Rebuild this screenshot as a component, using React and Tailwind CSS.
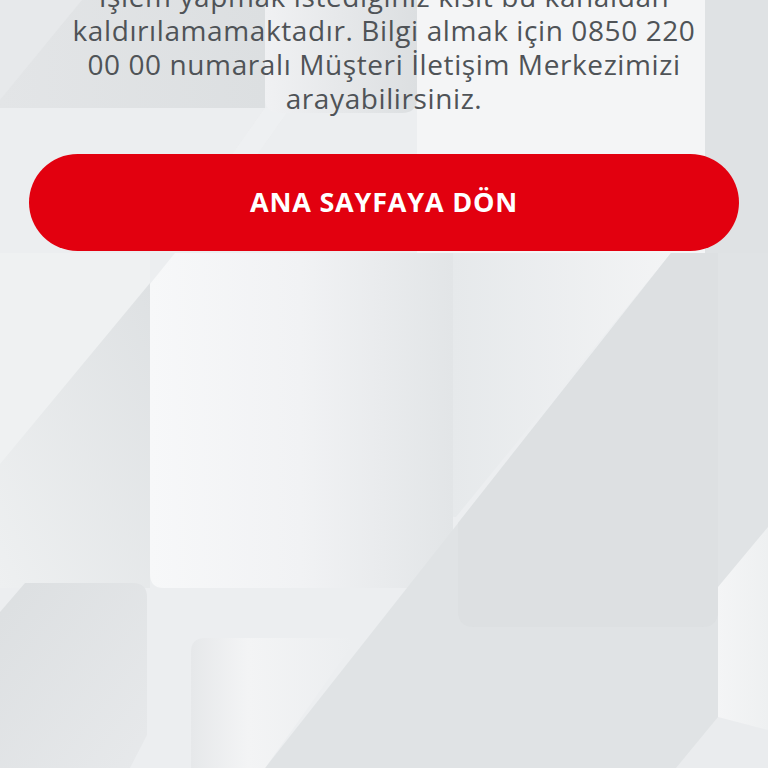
import React from "react";

function Background() {
  return (
    <svg
      className="absolute inset-0 h-full w-full"
      viewBox="0 0 768 768"
      preserveAspectRatio="none"
      aria-hidden="true"
    >
      <defs>
        <linearGradient id="lightRect" x1="0" y1="0" x2="1" y2="0">
          <stop offset="0" stopColor="#f7f8f9" />
          <stop offset="0.5" stopColor="#f1f2f4" />
          <stop offset="1" stopColor="#e2e5e7" />
        </linearGradient>
        <linearGradient id="midTri" x1="0" y1="0" x2="1" y2="0">
          <stop offset="0" stopColor="#e6e9eb" />
          <stop offset="1" stopColor="#f3f4f5" />
        </linearGradient>
        <linearGradient id="leftDark" x1="1" y1="0" x2="0" y2="1">
          <stop offset="0" stopColor="#dee1e3" />
          <stop offset="1" stopColor="#eef0f1" />
        </linearGradient>
        <linearGradient id="topShape" x1="0" y1="0" x2="1" y2="0">
          <stop offset="0" stopColor="#f0f1f3" />
          <stop offset="1" stopColor="#dcdfe1" />
        </linearGradient>
        <linearGradient id="topLeft" x1="0" y1="0" x2="1" y2="0">
          <stop offset="0" stopColor="#e3e5e7" />
          <stop offset="1" stopColor="#dcdfe1" />
        </linearGradient>
        <linearGradient id="lowerLight" x1="0" y1="0" x2="1" y2="0">
          <stop offset="0" stopColor="#e6e8ea" />
          <stop offset="0.35" stopColor="#f3f4f5" />
          <stop offset="1" stopColor="#eceef0" />
        </linearGradient>
        <linearGradient id="darkBL" x1="0" y1="0" x2="1" y2="1">
          <stop offset="0" stopColor="#dcdfe1" />
          <stop offset="1" stopColor="#e7e9eb" />
        </linearGradient>
        <linearGradient id="rightLight" x1="0" y1="0" x2="1" y2="0">
          <stop offset="0" stopColor="#f4f5f6" />
          <stop offset="1" stopColor="#eef0f1" />
        </linearGradient>
      </defs>

      <rect x="0" y="0" width="768" height="768" fill="#eceef0" />

      {/* top area */}
      <rect x="0" y="0" width="265" height="108" fill="url(#topLeft)" />
      <polygon points="0,0 82,0 0,100" fill="#e7e9eb" />
      <polygon points="265,108 290,108 225,200 200,200" fill="#f0f1f2" opacity="0.7" />
      <path d="M265 0 H417 V98 Q417 113 402 113 H280 Q265 113 265 98 Z" fill="url(#topShape)" />
      <rect x="417" y="0" width="288" height="253" fill="#f4f5f6" />
      <rect x="705" y="0" width="63" height="253" fill="#dfe2e4" />

      {/* middle area */}
      <rect x="0" y="253" width="150" height="335" fill="#eff1f2" />
      <polygon points="150,283 150,588 0,588 0,464" fill="url(#leftDark)" />
      <polygon points="453,253 671,253 456,517 453,517" fill="url(#midTri)" />
      <path d="M175 253 H453 V588 H164 Q150 588 150 574 V284 Z" fill="url(#lightRect)" />
      <polygon points="671,253 768,253 768,768 265,768" fill="#e0e3e5" />
      <path d="M458 523 L671 253 H718 V611 Q718 627 702 627 H474 Q458 627 458 611 Z" fill="#dadde0" opacity="0.6" />
      <polygon points="768,527 768,730 718,730 718,587" fill="url(#rightLight)" />
      <polygon points="718,717 768,730 768,768 676,768" fill="#eaecee" />

      {/* bottom area */}
      <rect x="147" y="588" width="60" height="180" fill="#eceef0" />
      <path d="M191 652 Q191 638 205 638 H345 Q356 638 352 646 L265 768 H191 Z" fill="url(#lowerLight)" />
      <path d="M25 583 H133 Q147 583 147 597 V735 L130 768 H0 V612 Z" fill="url(#darkBL)" />
    </svg>
  );
}

export default function App() {
  return (
    <div className="relative h-[768px] w-[768px] overflow-hidden bg-[#eceef0]">
      <Background />
      <div className="relative flex flex-col items-center">
        <p
          className="mt-[-21px] text-center text-[28px] leading-[34px] tracking-[0.6px] text-[#4f5357]"
          style={{ fontFamily: "'Open Sans', 'Noto Sans', sans-serif" }}
        >
          İşlem yapmak istediğiniz kısıt bu kanaldan
          <br />
          kaldırılamamaktadır. Bilgi almak için 0850 220
          <br />
          00 00 numaralı Müşteri İletişim Merkezimizi
          <br />
          arayabilirsiniz.
        </p>
        <button
          className="mt-[39px] flex h-[97px] w-[710px] items-center justify-center rounded-full bg-[#e2000f] text-[27px] font-bold tracking-[0.8px] text-white"
          style={{ fontFamily: "'Open Sans', 'Noto Sans', sans-serif" }}
        >
          ANA SAYFAYA DÖN
        </button>
      </div>
    </div>
  );
}
